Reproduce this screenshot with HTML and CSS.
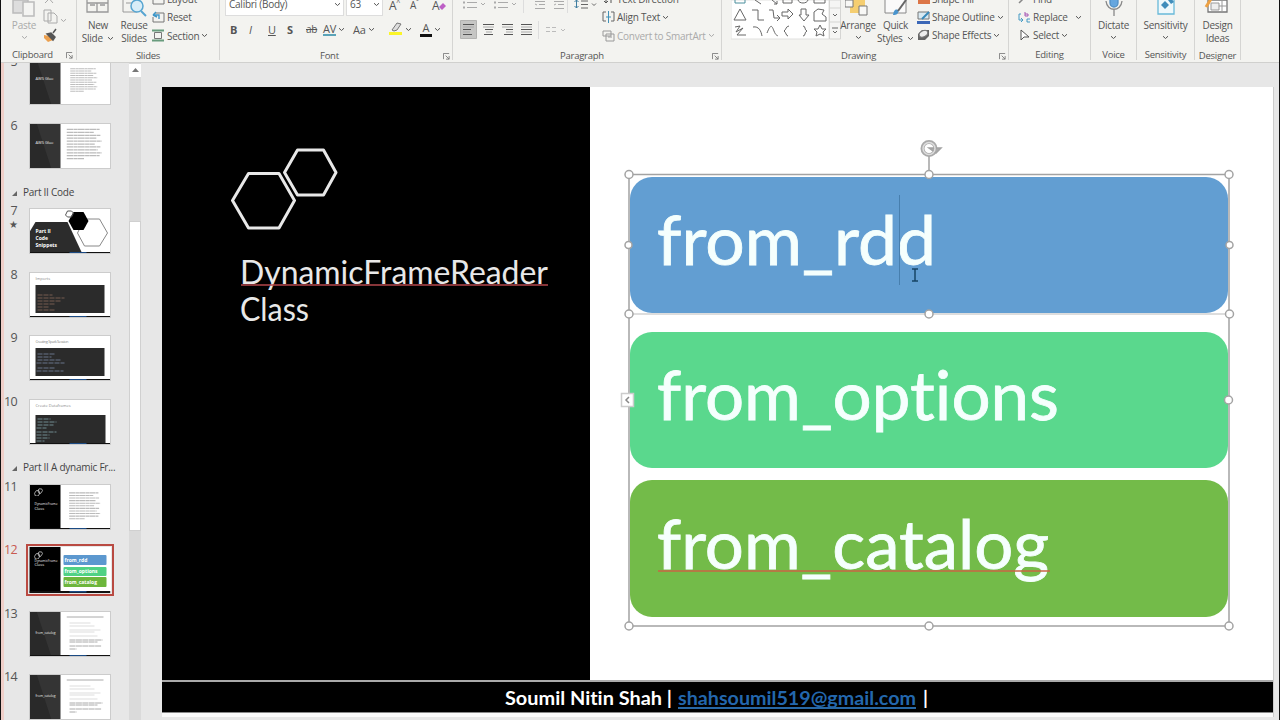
FILE: index.html
```
<!DOCTYPE html>
<html lang="en">
<head>
  <meta charset="UTF-8">
  <meta name="viewport" content="width=device-width, initial-scale=1.0">
  <title>DynamicFrameReader Class - Slides</title>
  <link rel="stylesheet" href="styles.css">
</head>
<body>

  <!-- Shared drawings -->
  <svg class="defs" width="0" height="0">
    <symbol id="caret" viewBox="0 0 7 5"><path d="M1 1.2L3.5 3.5 6 1.2" fill="none" stroke="currentColor"/></symbol>
    <symbol id="launch" viewBox="0 0 8 8"><path d="M.5 7V.5H7M3 3l4 4M7 3.5V7H3.5" fill="none" stroke="#777"/></symbol>
    <symbol id="copy-lines" viewBox="0 0 38 36">
      <path d="M0 1h34M0 4h28M0 7h35M0 10h31M0 13h36M0 16h29M0 19h35M0 22h32M0 25h36M0 28h34M0 31h18" stroke="#bbb" stroke-width="1.3" stroke-dasharray="7 .4 4 .3"/>
    </symbol>
    <symbol id="plain-side" viewBox="0 0 81 46">
      <path d="M0 0h31v46H0z" fill="#343434"/><path d="M0 0h7l15 46H0z" fill="#292929"/>
    </symbol>
    <symbol id="foot" viewBox="0 0 81 2"><path d="M0 0h81v2H0z" fill="#111"/><path d="M40 0h17v1.5H40z" fill="#1b4a83"/></symbol>
    <symbol id="hexes" viewBox="0 0 11 9"><path d="M1 6l2-3h3l1 3-2 3H2zM5 3l1-2h3l1 2-2 3H6z" fill="none" stroke="#ddd" stroke-width=".8"/></symbol>
    <symbol id="calls" viewBox="0 0 38 34">
      <path d="M0 1h37" stroke="#aaa"/><path d="M3 7h21M3 10h25M3 14h31M3 16h25M3 20h28" stroke="#ddd"/>
      <path d="M3 24h33M3 26h28M3 30h32M3 33h7" stroke="#aaa" stroke-dasharray="6 .4"/>
    </symbol>
  </svg>

  <header class="ribbon">
    <section class="group clipboard">
      <div class="tools">
        <div class="big faded">
          <svg width="26" height="18" fill="none" stroke="#bbb" stroke-width="1.5"><path d="M11 13H2V0h15v2" fill="#ddd"/><path d="M12 2h11v14H12z" fill="#f4f4f2"/></svg>
          <span>Paste</span>
          <svg class="caret"><use href="#caret"/></svg>
        </div>
        <div class="stack">
          <svg width="14" height="18" fill="none" stroke="#aaa"><path d="M2 13l8-8M10 13L3 5"/></svg>
          <div><svg width="15" height="16" fill="none" stroke="#aaa"><path d="M1 2h7v11H1zM5 5h6l3 3v7H5z"/></svg><svg class="caret faded"><use href="#caret"/></svg></div>
          <svg width="15" height="16"><path d="M1 8l5 1 4 4-5 2-4-4z" fill="#eba04f"/><path d="M4 7l4-1 4 4-2 3zM10 6l3-4" fill="#555" stroke="#555" stroke-width="1.5"/></svg>
        </div>
      </div>
      <footer>Clipboard<svg class="launch"><use href="#launch"/></svg></footer>
    </section>

    <section class="group slides">
      <div class="tools">
        <div class="big">
          <svg width="24" height="18" fill="none" stroke="#999" stroke-width="1.3"><path d="M1 0v12h21V0M1 3h21M11 3v9M4 5h5M14 5h5"/></svg>
          <span>New</span><span>Slide <svg class="caret"><use href="#caret"/></svg></span>
        </div>
        <div class="big">
          <svg width="26" height="18" fill="none" stroke="#999"><path d="M2 0v12h14M5 3h6"/><circle cx="16" cy="6" r="6" fill="#d8edf7" stroke="#57a5d1" stroke-width="1.5"/><path d="M20 11l5 5" stroke="#57a5d1" stroke-width="2"/></svg>
          <span>Reuse</span><span>Slides</span>
        </div>
        <div class="list">
          <span><svg width="13" height="12" fill="none" stroke="#777"><path d="M1 1h11v10H1z"/></svg>Layout</span>
          <span><svg width="13" height="12" fill="none" stroke="#777"><path d="M3 2h9v9H1V6"/><path d="M1 4l3-3M1 4l4 2M2 4h5v4" stroke="#3d96c8" stroke-width="1.4"/></svg>Reset</span>
          <span><svg width="13" height="13" fill="none"><path d="M0 1.5h12M0 11.5h12" stroke="#689b7d" stroke-width="2"/><path d="M2.5 3.5h7v6h-7z" stroke="#777"/></svg>Section<svg class="caret"><use href="#caret"/></svg></span>
        </div>
      </div>
      <footer>Slides</footer>
    </section>

    <section class="group font">
      <div class="tools rows">
        <div class="row">
          <span class="field family">Calibri (Body)<svg class="caret"><use href="#caret"/></svg></span>
          <span class="field size">63<svg class="caret"><use href="#caret"/></svg></span>
          <b class="grow">A<sup>^</sup></b><b class="grow small">A<sup>ˇ</sup></b>
          <b class="grow">A<svg width="7" height="7"><path d="M0 4l4-4 3 3-4 4z" fill="#bd5fc5"/></svg></b>
        </div>
        <div class="row marks">
          <b>B</b><i>I</i><u>U</u><b>S</b><s>ab</s>
          <span class="av">AV</span><svg class="caret"><use href="#caret"/></svg>
          <span>Aa</span><svg class="caret"><use href="#caret"/></svg>
          <svg class="pen" width="15" height="16"><path d="M4 9l5-7 4 1-4 6-3 1z" fill="#ddd" stroke="#777"/><path d="M1 11h13v3H1z" fill="#fbf527"/></svg><svg class="caret"><use href="#caret"/></svg>
          <span class="ink">A</span><svg class="caret"><use href="#caret"/></svg>
        </div>
      </div>
      <footer>Font<svg class="launch"><use href="#launch"/></svg></footer>
    </section>

    <section class="group paragraph">
      <div class="tools">
        <svg width="145" height="46" fill="none" stroke="#aaa">
          <path d="M14 2.500h10M14 7.500h10M45 2.500h10M45 7.500h10M82 1.500h10M86 4.500h6M82 8.500h10M101 1.500h10M105 4.500h6M101 8.500h10"/>
          <path d="M10 2.500h2M10 7.500h2M41 2.500h2M41 7.500h2" stroke-width="2"/>
          <path d="M28 3l2 2 2-2M59 3l2 2 2-2M82 4l2 1M103 4l-2 1"/>
          <path d="M70.500 0v13M114.500 0v13M85.500 21v18" stroke="#ddd"/>
          <path d="M7.500 20.500h16v18h-16z" fill="#c6c6c4" stroke="#b3b3b1"/>
          <path d="M10 24.500h11M10 29.500h8M10 34.500h9M30 24.500h11M32 29.500h8M31 34.500h9M49 24.500h11M53 29.500h7M51 34.500h9M68 24.500h11M68 29.500h11M68 34.500h11" stroke="#555"/>
          <path d="M10 27h11M10 32h7M30 27h11M33 32h6M49 27h11M53 32h7M68 27h11M68 32h11" stroke="#aaa"/>
          <path d="M93 27.500h4M99 27.500h4M93 31.500h4M99 31.500h4M108 29l2 2 2-2" stroke="#bbb"/>
          <path d="M123.500 0v8M121.500 2l2-2 2 2M121.500 6l2 2 2-2" stroke="#3f7da0"/>
          <path d="M128 1h7M128 4.500h7M128 8h7M139 3.500l2 2 2-2" stroke="#666"/>
        </svg>
        <div class="list">
          <span><svg width="13" height="12" fill="none" stroke="#555"><path d="M4 1v9M2 8l2 2 2-2M9 2v8"/></svg>Text Direction</span>
          <span><svg width="13" height="12" fill="none" stroke="#666"><path d="M4 1H1v9h3M9 1h3v9H9"/><path d="M6.500 0v12M4 6h5" stroke="#3f91b8"/></svg>Align Text<svg class="caret"><use href="#caret"/></svg></span>
          <span class="faded"><svg width="13" height="12" fill="none" stroke="#999"><path d="M1 1h8v5H1zM4 4h8v7H4zM6 7h4"/></svg>Convert to SmartArt<svg class="caret"><use href="#caret"/></svg></span>
        </div>
      </div>
      <footer>Paragraph<svg class="launch"><use href="#launch"/></svg></footer>
    </section>

    <section class="group drawing">
      <div class="tools">
        <svg class="gallery" width="110" height="40" fill="none" stroke="#666">
          <path d="M0 0h98v39H0z" fill="#fff" stroke="#e1e1df"/><path d="M98.500 0h11v39h-11zM98 8h12M98 22h12" fill="#f5f5f4" stroke="#d5d5d3"/>
          <path d="M4 0v3h10V0" stroke="#4b8e9c"/><path d="M24 0l6 4M41 0l5 4M46 1v3h-3M52 0v3h9V0M67 0c1 4 9 4 10 0M83 0v3h11V0"/>
          <path d="M3 20l6-11 6 11zM21 10h6v10h6M38 10h4l1 8h5M46 15l3 3-3 3M51 12h6V9l5 5-5 5v-3h-6zM70 9h5v6h3l-5 6-5-6h2zM83 12l4-3 6 1-2 4 4 3v4H83z"/>
          <path d="M4 27l5-1-4 6 7-4-6 7h9M22 27c6-1 8 4 9 9M36 33c4-10 5-7 7-2s3 4 4 5M58 26c-3 0-3 4-5 5 2 1 2 5 4 5M72 26c3 0 1 4 4 5-3 1-1 5-4 5M89 25l2 4h4l-3 3 1 4-4-2-4 2 1-4-3-3h4z"/>
          <path d="M102 14l2 2 2-2M101 28h6M102 31l2 2 2-2"/>
        </svg>
        <div class="big arrange">
          <svg width="26" height="18"><path d="M5 0h15v13H5z" fill="#f5ce70"/><path d="M0 0h8v7H0zM14 6h8v9h-8z" fill="#f8f8f6" stroke="#777"/></svg>
          <span>Arrange</span><svg class="caret"><use href="#caret"/></svg>
        </div>
        <div class="big quick">
          <svg width="26" height="18"><path d="M2 0v13h21V0" fill="#fafafa" stroke="#888"/><path d="M10 15c1-6 3-6 6-5-1 4-2 5-6 5z" fill="#4994cd"/><path d="M15 11l8-11" stroke="#666" stroke-width="2"/></svg>
          <span>Quick</span><span>Styles <svg class="caret"><use href="#caret"/></svg></span>
        </div>
        <div class="list shape">
          <span><svg width="13" height="13"><path d="M1 7h12v4H1z" fill="#dc7546"/></svg>Shape Fill</span>
          <span><svg width="13" height="13"><path d="M1 1h11v7H1z" fill="#d9eaf2" stroke="#777"/><path d="M5 8l7-7" stroke="#3889ba" stroke-width="2"/><path d="M0 10h13v3H0z" fill="#3b67b7"/></svg>Shape Outline<svg class="caret"><use href="#caret"/></svg></span>
          <span><svg width="13" height="12"><path d="M1 5l4-4h7v6l-4 4H1z" fill="#666"/><ellipse cx="6.500" cy="5" rx="4.500" ry="3" fill="#eee" stroke="#777" transform="rotate(-25 6 5)"/></svg>Shape Effects<svg class="caret"><use href="#caret"/></svg></span>
        </div>
      </div>
      <footer>Drawing<svg class="launch"><use href="#launch"/></svg></footer>
    </section>

    <section class="group editing">
      <div class="tools">
        <div class="list shape">
          <span><svg width="13" height="12"><path d="M1 10l5-5" stroke="#888" stroke-width="1.500"/></svg>Find</span>
          <span><svg width="13" height="12" fill="none" stroke="#449ac4"><path d="M3 3H1v6h4M3 7l2 2-2 2M12 8h-3v3h3"/><path d="M7 1v4h3V3H7" stroke="#a555b3"/></svg>Replace<svg class="caret wide"><use href="#caret"/></svg></span>
          <span><svg width="13" height="12"><path d="M3 1v10l3-3h5z" fill="#fff" stroke="#555"/></svg>Select<svg class="caret"><use href="#caret"/></svg></span>
        </div>
      </div>
      <footer>Editing</footer>
    </section>

    <section class="group single voice">
      <div class="tools"><div class="big">
        <svg width="20" height="18" fill="none" stroke="#888" stroke-width="1.300"><path d="M6 0v3a4 4 0 0 0 8 0V0" fill="#65a6df" stroke="#508fc5"/><path d="M2 1c1 11 15 11 16 0M10 10v6"/></svg>
        <span>Dictate</span><svg class="caret"><use href="#caret"/></svg>
      </div></div>
      <footer>Voice</footer>
    </section>

    <section class="group single sensitivity">
      <div class="tools"><div class="big">
        <svg width="20" height="18"><path d="M2 0v14h16V0" fill="#eff8fb" stroke="#68b9d9" stroke-width="1.300"/><path d="M5 5l4-4 4 4-4 4zM12 0l3-2 3 4-3 2z" fill="#408dbb"/></svg>
        <span>Sensitivity</span><svg class="caret"><use href="#caret"/></svg>
      </div></div>
      <footer>Sensitivity</footer>
    </section>

    <section class="group single designer">
      <div class="tools"><div class="big">
        <svg width="26" height="18"><path d="M4 0h19v12H4z" fill="#fff" stroke="#777" stroke-width="1.300"/><path d="M7 3h8v7H7zM18 0v12M15 6h8" fill="#eee" stroke="#999"/><path d="M2 7l5-8" stroke="#eda143" stroke-width="3"/></svg>
        <span>Design</span><span>Ideas</span>
      </div></div>
      <footer>Designer</footer>
    </section>
  </header>

  <main class="workspace">
    <aside class="panel">
      <ol class="thumbs">
        <li><span class="num">5</span>
          <svg class="thumb" viewBox="0 0 81 46"><use href="#plain-side" width="81" height="46"/><text x="6" y="21">AWS Glue</text><use href="#copy-lines" x="37" y="9" width="36" height="27"/></svg></li>
        <li><span class="num">6</span>
          <svg class="thumb" viewBox="0 0 81 46"><use href="#plain-side" width="81" height="46"/><text x="6" y="21">AWS Glue</text><use href="#copy-lines" x="37" y="5" width="37" height="36"/></svg></li>
        <li class="part"><i></i>Part II Code</li>
        <li><span class="num">7<small>★</small></span>
          <svg class="thumb" viewBox="0 0 81 46">
            <path d="M0 24l6-10h32l14 30H0z" fill="#2c2c2c"/><path d="M55 11h15l8 14-8 13H55l-7-13z" fill="#fff" stroke="#888"/>
            <path d="M44 4h10l5 9-5 9H44l-5-9z"/><path d="M36 7l2-4h4l2 2-2 4h-4z" fill="none" stroke="#555"/>
            <text class="strong" x="6" y="25">Part II</text><text class="strong" x="6" y="32">Code</text><text class="strong" x="6" y="39">Snippets</text><use href="#foot" y="44" width="81" height="2"/></svg></li>
        <li><span class="num">8</span>
          <svg class="thumb" viewBox="0 0 81 46"><text class="dark" x="6" y="8">Imports</text><path d="M6 13h69v28H6z" fill="#2b2b2b"/>
            <path d="M8 23h15M8 26h27M8 29h24M8 32h18M8 35h11M8 38h17" stroke="#765c50" stroke-dasharray="5 1"/><use href="#foot" y="44" width="81" height="2"/></svg></li>
        <li><span class="num">9</span>
          <svg class="thumb" viewBox="0 0 81 46"><text class="dark" x="6" y="8" textLength="33">Creating Spark Session</text><path d="M6 13h69v28H6z" fill="#2b2b2b"/>
            <path d="M8 19h18M8 22h14M8 25h23M7 28h28M8 33h17M7 36h27" stroke="#68758a" stroke-dasharray="5 1"/><use href="#foot" y="44" width="81" height="2"/></svg></li>
        <li><span class="num">10</span>
          <svg class="thumb" viewBox="0 0 81 46"><text class="dark" x="6" y="8">Create Dataframes</text><path d="M6 16h70v28H6z" fill="#2b2b2b"/>
            <path d="M8 20h13M8 23h19M8 26h16M7 29h10M7 33h20M7 36h13M7 39h13M7 42h8" stroke="#718b90" stroke-dasharray="5 1"/><use href="#foot" y="44" width="81" height="2"/></svg></li>
        <li class="part"><i></i>Part II A dynamic Fr...</li>
        <li><span class="num">11</span>
          <svg class="thumb" viewBox="0 0 81 46"><path d="M0 0h31v46H0z"/><use href="#hexes" x="4" y="4" width="10" height="8"/><text x="5" y="21" textLength="23" lengthAdjust="spacingAndGlyphs">DynamicFrame</text><text x="5" y="26">Class</text><use href="#copy-lines" x="39" y="8" width="34" height="31"/><use href="#foot" y="44" width="81" height="2"/></svg></li>
        <li class="current"><span class="num">12</span>
          <svg class="thumb" viewBox="0 0 81 46"><path d="M0 0h31v46H0z"/><use href="#hexes" x="4" y="4" width="10" height="8"/><text x="5" y="15" textLength="23" lengthAdjust="spacingAndGlyphs">DynamicFrame</text><text x="5" y="19">Class</text>
            <rect x="34" y="8" width="43" height="10" rx="1" fill="#5c98cf"/><rect x="34" y="20" width="43" height="9" rx="1" fill="#50d184"/><rect x="34" y="30" width="43" height="10" rx="1" fill="#6db63c"/>
            <text class="strong" x="35" y="15">from_rdd</text><text class="strong" x="35" y="26">from_options</text><text class="strong" x="35" y="37">from_catalog</text><use href="#foot" y="44" width="81" height="2"/></svg></li>
        <li><span class="num">13</span>
          <svg class="thumb" viewBox="0 0 81 46"><use href="#plain-side" width="81" height="46"/><text x="6" y="23" textLength="20" lengthAdjust="spacingAndGlyphs">from_catalog</text><use href="#calls" x="37" y="5" width="38" height="34"/><use href="#foot" y="44" width="81" height="2"/></svg></li>
        <li><span class="num">14</span>
          <svg class="thumb" viewBox="0 0 81 46"><use href="#plain-side" width="81" height="46"/><text x="6" y="23" textLength="20" lengthAdjust="spacingAndGlyphs">from_catalog</text><use href="#calls" x="37" y="5" width="38" height="34"/></svg></li>
      </ol>
      <div class="scrollbar"><div class="up"><svg width="7" height="5"><path d="M0 4l3.500-4L7 4z" fill="#777"/></svg></div><div class="handle"></div></div>
    </aside>

    <article class="slide">
      <div class="slide-body">
        <div class="title-side">
          <svg width="428" height="260">
            <g fill="none" stroke="#e8e8e8" stroke-width="3" stroke-linejoin="round">
              <path d="M86.500 86.500h30.500l15.500 27-15.500 27.500H86.500L70.500 113.500z"/>
              <path d="M135.500 63h26l12.500 22.500-12.500 22.500h-26L122.500 85.500z"/>
            </g>
            <text x="78" y="197" textLength="308" lengthAdjust="spacingAndGlyphs">DynamicFrameReader</text>
            <path d="M79 198h307" stroke="#b5474c" stroke-width="1.500"/>
            <text x="78" y="234" textLength="69" lengthAdjust="spacingAndGlyphs">Class</text>
          </svg>
        </div>
        <div class="cards">
          <div class="card blue"><svg width="598" height="136"><text x="27" y="88" textLength="279" lengthAdjust="spacingAndGlyphs">from_rdd</text></svg></div>
          <div class="card mint"><svg width="598" height="136"><text x="27" y="88" textLength="402" lengthAdjust="spacingAndGlyphs">from_options</text></svg></div>
          <div class="card green"><svg width="598" height="137"><text x="27" y="89" textLength="392" lengthAdjust="spacingAndGlyphs">from_catalog</text><path d="M28 91h392" stroke="#c96445" stroke-width="1.500"/></svg></div>
          <!-- Selection frame, text caret and pointer -->
          <svg class="selection" width="620" height="500" fill="none" stroke="#a3a3a3" stroke-width="1.500">
            <path d="M10 36.500h600M10 36v452h600V36M310 36V15"/><path d="M10 176h600" stroke="#bbb" stroke-width="1"/>
            <path d="M280.500 57v90" stroke="#477fae" stroke-width="1"/>
            <path d="M293 131h6M293 143h6M296 131v12" stroke="#174566"/>
            <circle cx="310" cy="10.500" r="6.500" stroke="#aaa" stroke-width="4"/><path d="M310 10h12l-5 5z" fill="#aaa"/><circle cx="310" cy="10.500" r="6" stroke="#ddd" stroke-width="1.500"/>
            <g fill="#fff"><circle cx="10" cy="36.500" r="4"/><circle cx="310" cy="36.500" r="4"/><circle cx="610" cy="36.500" r="4"/>
            <circle cx="9.500" cy="107" r="3.500"/><circle cx="610.500" cy="107" r="3.500"/><circle cx="10" cy="176" r="4"/><circle cx="310" cy="176" r="4"/><circle cx="610.500" cy="176" r="4"/>
            <circle cx="609.500" cy="262" r="4"/><circle cx="10" cy="488" r="4"/><circle cx="310" cy="488" r="4"/><circle cx="610" cy="488" r="4"/></g>
            <path d="M2.500 255.500h12v13h-12z" fill="#fff" stroke="#ccc"/><path d="M10 259l-3 3 3 3" stroke="#888"/>
          </svg>
        </div>
      </div>
      <div class="slide-foot">
        <svg width="1111" height="30">
          <text x="343" y="23" textLength="167" lengthAdjust="spacingAndGlyphs">Soumil Nitin Shah |</text>
          <text class="mail" x="516" y="23" textLength="238" lengthAdjust="spacingAndGlyphs">shahsoumil519@gmail.com</text>
          <path d="M516 26h238" stroke="#2868a5" stroke-width="2"/>
          <text x="761" y="23">|</text>
        </svg>
      </div>
    </article>
  </main>

</body>
</html>
```
FILE: styles.css
```
:root {
  --ribbon: #f3f3f0;
  --canvas: #e7e7e7;
  --ink: #555;
  --line: #d5d5d3;
}
* {
  box-sizing: border-box;
}
body {
  margin: 0;
  width: 1280px;
  height: 720px;
  overflow: hidden;
  font-family: "Open Sans", "Noto Sans", sans-serif;
  font-size: 10px;
  color: var(--ink);
  background: var(--canvas);
  border-left: 1px solid #111;
  border-right: 1px solid #111;
}
.defs {
  position: absolute;
}

/* Ribbon */
.ribbon {
  display: flex;
  height: 63px;
  padding-left: 1px;
  background: var(--ribbon);
  border-bottom: 1px solid #d0d0ce;
  overflow: hidden;
  letter-spacing: -0.25px;
}
.group {
  flex: none;
  display: flex;
  flex-direction: column;
  height: 60px;
  border-right: 1px solid var(--line);
}
.group footer {
  display: flex;
  justify-content: center;
  align-items: center;
  height: 10px;
  margin-top: 6px;
  font-size: 9.5px;
  line-height: 10px;
  white-space: nowrap;
}
.clipboard { width: 75px; }
.slides { width: 143px; }
.font { width: 233px; }
.paragraph { width: 269px; }
.drawing { width: 287px; }
.editing { width: 82px; }
.voice { width: 46px; }
.sensitivity { width: 58px; }
.designer { width: 46px; }
.clipboard footer { padding-left: 9px; }
.launch {
  width: 7px;
  height: 7px;
  margin-left: auto;
  margin-right: 2px;
}
.clipboard .launch { margin-left: 13px; }
.font footer { padding-left: 100px; }
.paragraph footer { padding-left: 107px; }
.drawing footer { padding-left: 119px; }
.font footer, .paragraph footer, .drawing footer { justify-content: flex-start; }
.tools {
  display: flex;
  height: 45px;
}
.single .tools {
  justify-content: center;
}
.caret {
  width: 7px;
  height: 5px;
  margin-left: 2px;
  vertical-align: 1px;
}
.faded {
  color: #aaa;
}
.big {
  display: flex;
  flex-direction: column;
  align-items: center;
  line-height: 13px;
  white-space: nowrap;
}
.big > svg:first-child {
  margin-bottom: 1px;
}
.big > .caret {
  margin: 3px 0 0;
}
.clipboard .big { width: 41px; padding-left: 3px; }
.slides .big { width: 28px; }
.slides .big:first-child { width: 43px; padding-right: 1px; }
.stack {
  display: flex;
  flex-direction: column;
  margin-top: -10px;
}
.list {
  display: flex;
  flex-direction: column;
  margin-top: -10px;
}
.list > span {
  display: flex;
  align-items: center;
  height: 18.5px;
  white-space: nowrap;
}
.list > span > svg:first-child {
  margin-right: 2px;
}
.slides .list { margin-left: 4px; }
.shape > span { height: 18px; }
.rows {
  flex-direction: column;
}
.row {
  display: flex;
  align-items: center;
}
.font .row:first-child {
  height: 26px;
  margin-top: -13px;
  padding: 10px 0 0 5px;
}
.field {
  display: flex;
  align-items: center;
  justify-content: space-between;
  height: 21px;
  padding: 0 2px 2px 3px;
  background: #fff;
  border: 1px solid #ddd;
}
.family { width: 119px; }
.size { width: 37px; margin-left: 2px; }
.grow {
  margin-left: 6px;
  font-size: 12px;
  font-weight: 400;
  width: 15px;
}
.grow sup { font-size: 7px; }
.small { font-size: 10px; margin-right: 1px; }
.marks {
  height: 33px;
  padding-left: 10px;
  font-size: 11px;
}
.marks > b, .marks > i, .marks > u { width: 19px; }
.marks > s { width: 17px; font-size: 10px; }
.marks > .caret { margin-right: 8px; }
.av {
  line-height: 11px;
  border-bottom: 2px solid #5aa3b8;
}
.marks > .caret + .pen { margin-left: 5px; }
.ink {
  padding: 0 3px;
  line-height: 12px;
  border-bottom: 3px solid #111;
}
.paragraph .list { margin-left: 4px; }
.gallery { margin-left: 9px; }
.arrange { width: 34px; }
.quick { width: 41px; }
.drawing .shape { margin-left: 1px; }
.editing .list { margin-left: 9px; }
.wide { margin-left: 7px; }

/* Slide list */
.workspace {
  display: flex;
  height: 657px;
}
.panel {
  display: flex;
  flex: none;
  width: 161px;
  border-left: 3px solid #efcfc9;
}
.thumbs {
  width: 125px;
  height: 657px;
  margin: 0;
  padding: 0;
  list-style: none;
  overflow: hidden;
}
.thumbs li {
  display: flex;
  height: 63.5px;
  align-items: flex-start;
}
.thumbs li:first-child {
  height: 60px;
}
.thumbs li:first-child .num,
.thumbs li:first-child .thumb {
  margin-top: -4px;
}
.num {
  flex: none;
  width: 13px;
  margin-right: 12px;
  font-size: 12.5px;
  line-height: 6px;
  letter-spacing: -0.6px;
  text-align: right;
}
.num small {
  display: block;
  margin-top: 7px;
  font-size: 10px;
}
.thumb {
  width: 82px;
  height: 46px;
  background: #fff;
  outline: 1px solid #ccc;
  outline-offset: -1px;
}
.thumb text {
  font: 4px "Open Sans", sans-serif;
  fill: #eee;
}
.thumb .strong { font-size: 5px; font-weight: 700; fill: #fff; }
.thumb .dark { fill: #888; }
.thumbs .part {
  height: 21.5px;
  padding: 0 0 0 8px;
  line-height: 11px;
  letter-spacing: -0.25px;
  color: #444;
  white-space: nowrap;
}
.part i {
  margin: 4px 6px 0 0;
  border-left: 5px solid transparent;
  border-bottom: 5px solid #666;
}
.current .num { color: #c85a50; }
.current .thumb {
  outline: 2px solid #b94a42;
  outline-offset: 1px;
}
.scrollbar {
  width: 12px;
  height: 657px;
  background: #dadada;
}
.up {
  display: flex;
  align-items: center;
  justify-content: center;
  height: 13px;
  margin-top: 1px;
  background: #fff;
}
.handle {
  height: 310px;
  margin-top: 144px;
  background: #fff;
  border: 1px solid #d0d0d0;
}

/* Slide */
.slide {
  width: 1112px;
  height: 630px;
  margin-top: 24px;
  background: #fafafa;
  border-right: 1px solid #ccc;
}
.slide-body {
  display: grid;
  grid-template-columns: 428px 1fr;
  height: 593px;
  background: #fff;
}
.title-side {
  background: #000;
}
.slide text {
  font-family: Lato, sans-serif;
  font-variant-ligatures: none;
}
.title-side text {
  font-size: 32px;
  fill: #e8e8e8;
}
.cards {
  position: relative;
  padding: 90px 0 0 40px;
}
.card {
  width: 598px;
  height: 136px;
  border-radius: 22px;
}
.card svg { display: block; }
.card text {
  font-size: 68px;
  fill: #f5fffd;
  stroke: #f5fffd;
  stroke-width: 0.8px;
}
.blue { background: #629ed2; }
.mint { margin-top: 19px; background: #5ad88d; }
.green { height: 137px; margin-top: 12px; background: #73bb49; }
.selection {
  position: absolute;
  left: 29px;
  top: 51px;
}
.slide-foot {
  height: 33px;
  background: #000;
  border-top: 2px solid #aaa;
  border-bottom: 1px solid #888;
}
.slide-foot text {
  font-size: 19px;
  font-weight: 700;
  fill: #fff;
}
.slide-foot .mail { fill: #2367ad; }
```
